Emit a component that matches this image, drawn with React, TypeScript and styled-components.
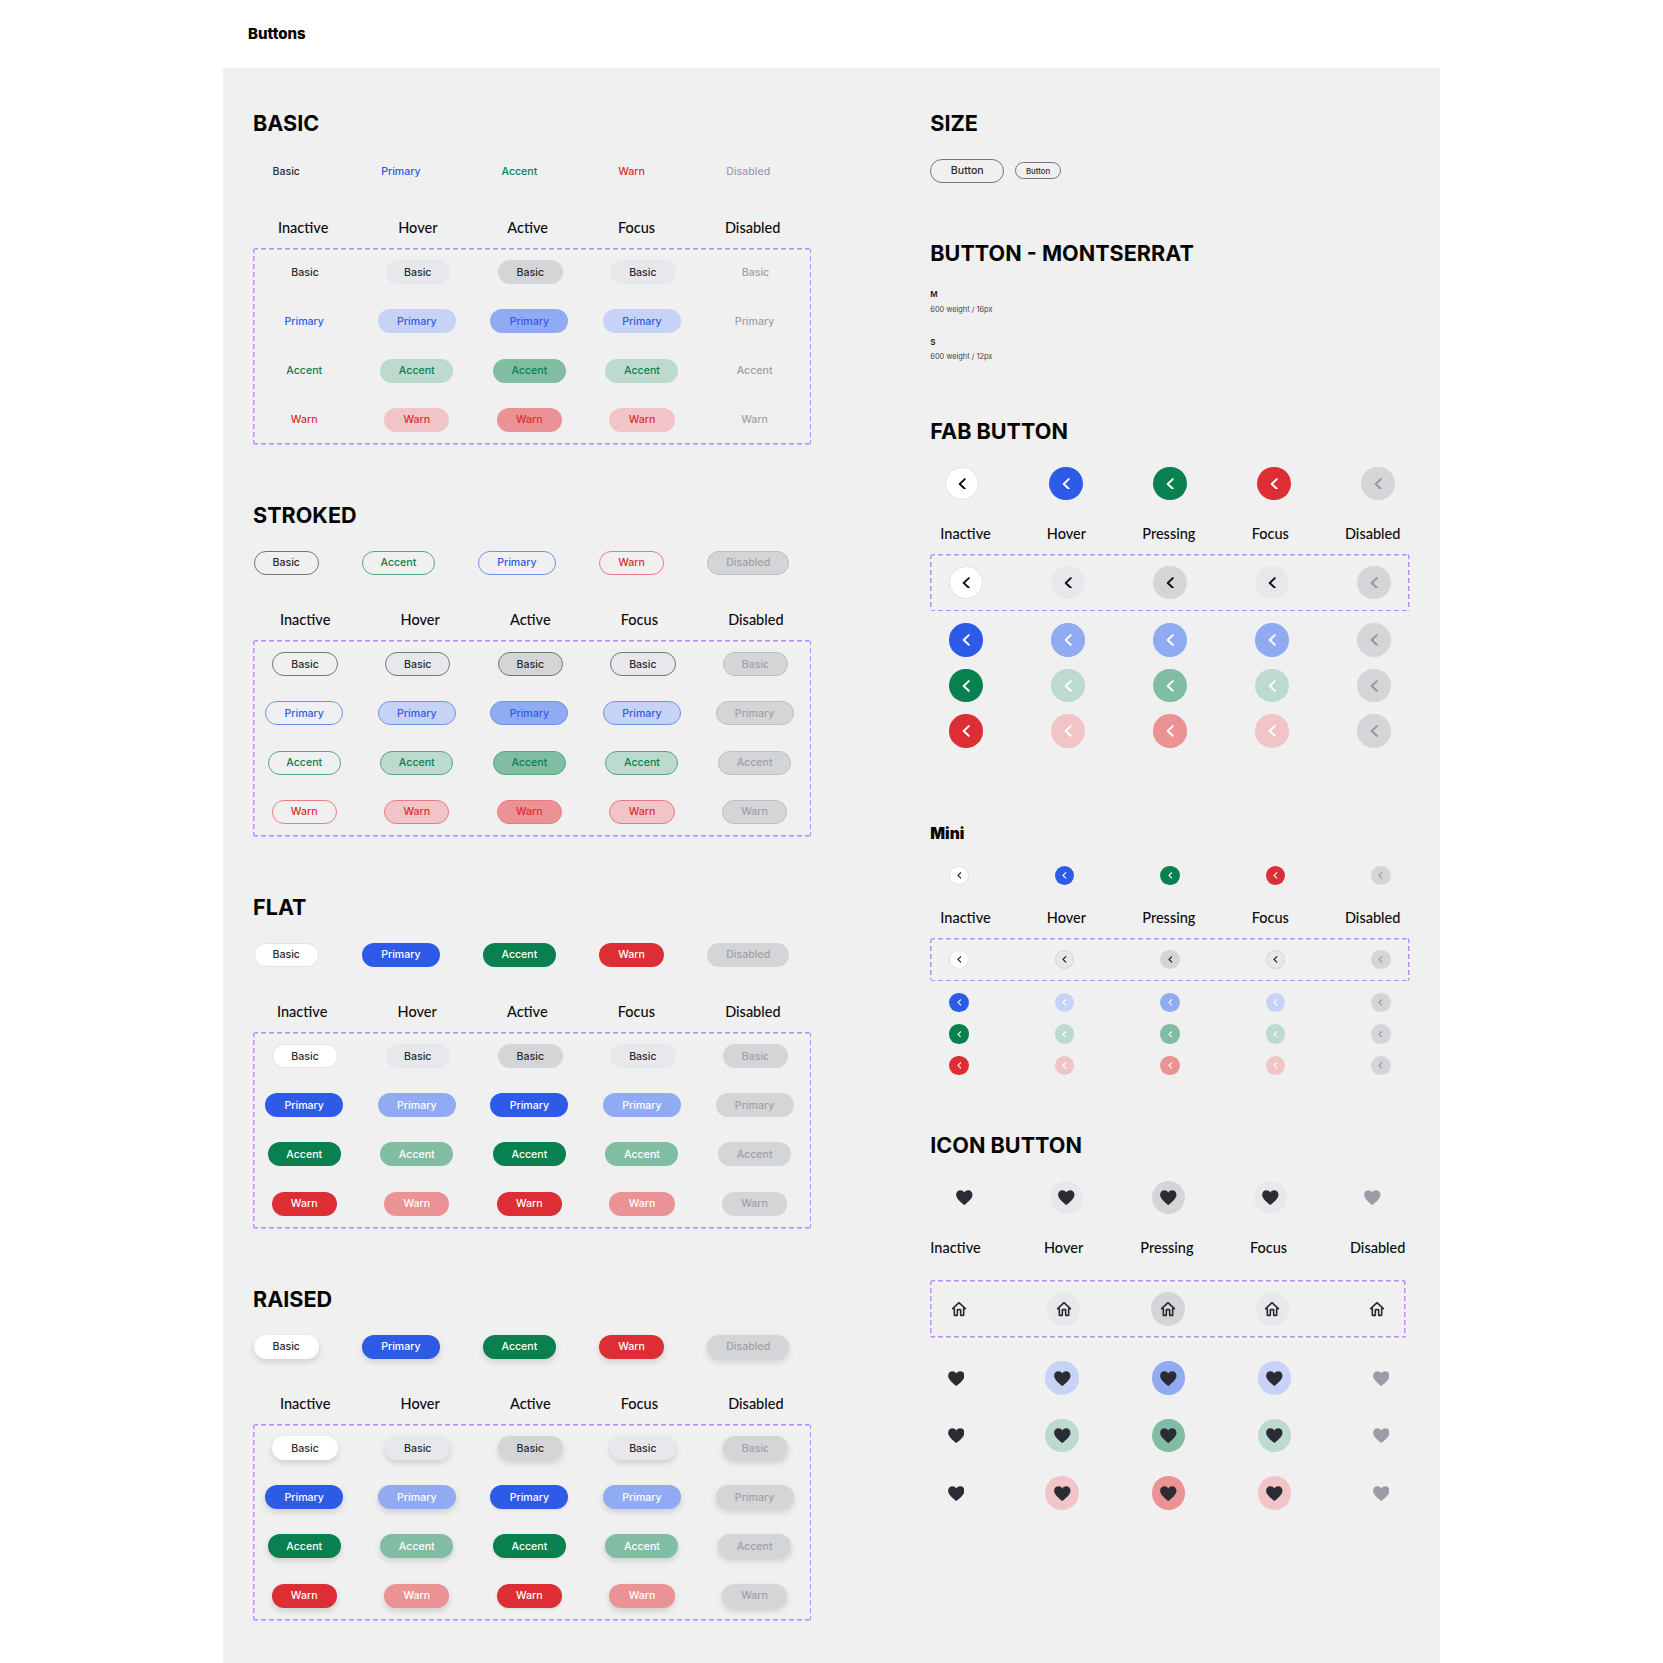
import React, { FC } from "react";
import styled, { createGlobalStyle } from "styled-components";

type Tone = "basic" | "primary" | "accent" | "warn";
type Variant = "basic" | "stroked" | "flat" | "raised";

const GRAY_BG = "#d4d5d7";
const GRAY_TEXT = "#a0a1ab";
const GRAY_LINE = "#bdbec4";
const DASH = "#b98cf7";

const TONES: Record<Tone, { main: string; soft: string; mid: string; line: string }> = {
  basic: { main: "#2b2b30", soft: "#e7e8ec", mid: "#d4d5d7", line: "#757575" },
  primary: { main: "#2d5be8", soft: "#c6d3f7", mid: "#91abf3", line: "#6f93ee" },
  accent: { main: "#08804f", soft: "#bcdacd", mid: "#80bda3", line: "#56a784" },
  warn: { main: "#dd2e35", soft: "#f1c5c7", mid: "#ea9294", line: "#ea7c80" },
};

const WIDTHS: Record<string, number> = { Basic: 65.4, Primary: 78, Accent: 73, Warn: 65.4, Disabled: 82 };
const LABEL_OF: Record<Tone, string> = { basic: "Basic", primary: "Primary", accent: "Accent", warn: "Warn" };
const TONE_LIST: Tone[] = ["basic", "primary", "accent", "warn"];

const GlobalStyle = createGlobalStyle`
  * { box-sizing: border-box; }
  html, body { margin: 0; padding: 0; background: #fff; }
  body { font-family: "Inter", "Liberation Sans", sans-serif; color: #0c0c0c; }
`;

const Page = styled.div`
  width: 1663px;
  height: 1663px;
  overflow: hidden;
`;

const TopBar = styled.header`
  height: 68px;
  padding: 0 0 2px 248px;
  display: flex;
  align-items: center;
  font-size: 15px;
  font-weight: 800;
  color: #000;
`;

const Panel = styled.main`
  width: 1217px;
  height: 1595px;
  margin-left: 223px;
  padding: 42px 0 0 30px;
  background: #f0f0f0;
  display: flex;
  gap: 119.3px;
`;

const LeftColumn = styled.div`
  width: 558px;
  display: flex;
  flex-direction: column;
  gap: 57px;
`;

const RightColumn = styled.div`
  width: 480px;
  display: flex;
  flex-direction: column;
`;

const Section = styled.section`
  display: flex;
  flex-direction: column;
`;

const Title = styled.h2<{ $top?: number }>`
  margin: ${(p) => p.$top ?? 0}px 0 0;
  height: 26px;
  line-height: 26px;
  font-size: 21.6px;
  font-weight: 700;
  color: #050505;
`;

const MiniTitle = styled.h3`
  margin: 76px 0 0;
  height: 20px;
  line-height: 20px;
  font-size: 15.5px;
  font-weight: 900;
  color: #050505;
`;

const SampleRow = styled.div`
  margin-top: 23px;
  padding-left: 0.5px;
  display: flex;
  gap: 43px;
`;

const LabelRow = styled.div<{ $pad: number; $gap?: number; $top?: number; $bottom?: number }>`
  margin: ${(p) => p.$top ?? 35}px 0 ${(p) => p.$bottom ?? 10}px;
  padding-left: ${(p) => p.$pad}px;
  height: 20px;
  display: flex;
  gap: ${(p) => p.$gap ?? 70.2}px;
`;

const StateLabel = styled.span`
  font-family: "Lato", "Liberation Sans", sans-serif;
  font-size: 14.5px;
  font-weight: 500;
  line-height: 20px;
  color: #0c0c0c;
  white-space: nowrap;
`;

const IconLabelRow = styled.div`
  margin: 23.5px 0 22px;
  height: 20px;
  display: grid;
  grid-template-columns: 113.7px 96.3px 109.7px 100px auto;
`;

// dashes drawn as gradients: a css dashed border gives too short a dash here
const DashedBox = styled.div<{ $width?: number; $pad: string }>`
  width: ${(p) => p.$width ?? 479.4}px;
  padding: ${(p) => p.$pad};
  border-radius: 3px;
  background:
    repeating-linear-gradient(90deg, ${DASH} 0 5px, transparent 5px 8px) top / 100% 1.5px no-repeat,
    repeating-linear-gradient(90deg, ${DASH} 0 5px, transparent 5px 8px) bottom / 100% 1.5px no-repeat,
    repeating-linear-gradient(180deg, ${DASH} 0 5px, transparent 5px 8px) left / 1.5px 100% no-repeat,
    repeating-linear-gradient(180deg, ${DASH} 0 5px, transparent 5px 8px) right / 1.5px 100% no-repeat;
`;

const ButtonGrid = styled.div`
  display: flex;
  flex-direction: column;
  gap: 25.2px;
`;

const ButtonRow = styled.div<{ $shift: number }>`
  width: 563px;
  margin-left: ${(p) => p.$shift}px;
  display: grid;
  grid-template-columns: repeat(5, 112.6px);
  justify-items: center;
`;

const Btn = styled.button<{ $w: number; $bg: string; $fg: string; $line: string; $shadow: string }>`
  width: ${(p) => p.$w}px;
  height: 24px;
  padding: 0;
  border: ${(p) => (p.$line === "none" ? "none" : `1px solid ${p.$line}`)};
  border-radius: 12px;
  background: ${(p) => p.$bg};
  color: ${(p) => p.$fg};
  box-shadow: ${(p) => p.$shadow};
  font-family: "Inter", "Liberation Sans", sans-serif;
  font-size: 10.6px;
  font-weight: 550;
`;

const SizeRow = styled.div`
  margin-top: 22.7px;
  height: 24px;
  display: flex;
  align-items: center;
  gap: 10.6px;
`;

const SizeButton = styled.button<{ $small?: boolean }>`
  width: ${(p) => (p.$small ? 46.3 : 74)}px;
  height: ${(p) => (p.$small ? 17 : 24)}px;
  padding: 0;
  border: 1px solid #757575;
  border-radius: 12px;
  background: transparent;
  color: #2b2b30;
  font-family: "Inter", "Liberation Sans", sans-serif;
  font-size: ${(p) => (p.$small ? 7.8 : 10.6)}px;
  font-weight: 550;
`;

const TypeName = styled.div<{ $top: number }>`
  margin-top: ${(p) => p.$top}px;
  height: 12px;
  line-height: 12px;
  font-size: 8px;
  font-weight: 600;
  color: #1a1a1a;
`;

const TypeNote = styled.div<{ $top: number }>`
  margin-top: ${(p) => p.$top}px;
  height: 11px;
  line-height: 11px;
  font-size: 7.4px;
  color: #444;
`;

const CircleRow = styled.div<{ $pad: number; $gap: number; $top?: number }>`
  margin-top: ${(p) => p.$top ?? 0}px;
  padding-left: ${(p) => p.$pad}px;
  display: flex;
  gap: ${(p) => p.$gap}px;
`;

const CircleStack = styled.div<{ $gap: number; $top: number }>`
  margin-top: ${(p) => p.$top}px;
  display: flex;
  flex-direction: column;
  gap: ${(p) => p.$gap}px;
`;

const Circle = styled.button<{ $size: number; $bg: string; $fg: string; $line?: string }>`
  width: ${(p) => p.$size}px;
  height: ${(p) => p.$size}px;
  flex: none;
  padding: 0;
  border: ${(p) => (p.$line ? `1px solid ${p.$line}` : "none")};
  border-radius: 50%;
  background: ${(p) => p.$bg};
  color: ${(p) => p.$fg};
  display: flex;
  align-items: center;
  justify-content: center;
`;

type IconProps = { size: number };

const Chevron: FC<IconProps> = ({ size }) => (
  <svg width={size} height={size * 1.4} viewBox="0 0 10 14" fill="none" stroke="currentColor" strokeWidth="2.3" strokeLinecap="round" strokeLinejoin="round">
    <path d="M8 1.300 2 7l6 5.700" />
  </svg>
);

const Heart: FC<IconProps> = ({ size }) => (
  <svg width={size} height={size * 0.9} viewBox="0 0 20 18" fill="currentColor">
    <path d="M10 18C9.400 17.500 1.400 11.600.4 7.400-.6 3.300 1.900.3 5.200.3c2 0 3.800 1 4.800 2.800C11 1.300 12.800.3 14.800.3c3.300 0 5.800 3 4.800 7.100C18.600 11.600 10.600 17.500 10 18z" />
  </svg>
);

const House: FC<IconProps> = ({ size }) => (
  <svg width={size} height={size} viewBox="0 0 24 24" fill="none" stroke="currentColor" strokeWidth="2.400" strokeLinecap="round" strokeLinejoin="round">
    <path d="M2.500 11.500 12 2.500l9.500 9H19V21.500h-4.500V14a1 1 0 0 0-1-1h-3a1 1 0 0 0-1 1v7.500H5V11.500z" />
  </svg>
);

const look = (variant: Variant, tone: Tone, state: number) => {
  const c = TONES[tone];
  const isBasic = tone === "basic";
  if (variant === "basic" || variant === "stroked") {
    const stroked = variant === "stroked";
    if (state === 4) {
      return { $bg: stroked ? GRAY_BG : "transparent", $fg: GRAY_TEXT, $line: stroked ? GRAY_LINE : "none", $shadow: "none" };
    }
    const bg = state === 0 ? "transparent" : state === 2 ? c.mid : c.soft;
    return { $bg: bg, $fg: c.main, $line: stroked ? c.line : "none", $shadow: "none" };
  }
  const raised = variant === "raised";
  const lift = raised ? "0 3px 6px rgba(0, 0, 0, 0.14)" : "none";
  if (state === 4) {
    return { $bg: GRAY_BG, $fg: GRAY_TEXT, $line: "none", $shadow: lift };
  }
  if (isBasic) {
    const bg = state === 0 ? "#ffffff" : state === 2 ? c.mid : c.soft;
    const line = !raised && state === 0 ? "#e4e4e4" : "none";
    return { $bg: bg, $fg: c.main, $line: line, $shadow: lift };
  }
  const strong = state === 0 || state === 2;
  const bg = strong ? c.main : c.mid;
  return { $bg: bg, $fg: "#ffffff", $line: "none", $shadow: raised && state === 2 ? "0 1px 3px rgba(0, 0, 0, 0.1)" : lift };
};

const SAMPLE_ORDER: Record<Variant, Tone[]> = {
  basic: ["basic", "primary", "accent", "warn"],
  stroked: ["basic", "accent", "primary", "warn"],
  flat: ["basic", "primary", "accent", "warn"],
  raised: ["basic", "primary", "accent", "warn"],
};

const STATES = ["Inactive", "Hover", "Active", "Focus", "Disabled"];
const PRESS_STATES = ["Inactive", "Hover", "Pressing", "Focus", "Disabled"];

type ButtonSectionProps = { title: string; variant: Variant; labelPad: number; labelGap: number };

const ButtonSection: FC<ButtonSectionProps> = ({ title, variant, labelPad, labelGap }) => (
  <Section>
    <Title>{title}</Title>
    <SampleRow>
      {SAMPLE_ORDER[variant].map((tone) => (
        <Btn key={tone} $w={WIDTHS[LABEL_OF[tone]]} {...look(variant, tone, 0)}>
          {LABEL_OF[tone]}
        </Btn>
      ))}
      <Btn $w={WIDTHS.Disabled} {...look(variant, "basic", 4)}>Disabled</Btn>
    </SampleRow>
    <LabelRow $pad={labelPad} $gap={labelGap}>
      {STATES.map((s) => (
        <StateLabel key={s}>{s}</StateLabel>
      ))}
    </LabelRow>
    <DashedBox $width={558} $pad="12.200px 0 13.200px">
      <ButtonGrid>
        {TONE_LIST.map((tone) => (
          <ButtonRow key={tone} $shift={tone === "basic" ? -4.2 : -5.1}>
            {STATES.map((_, state) => (
              <Btn key={state} $w={WIDTHS[LABEL_OF[tone]]} {...look(variant, tone, state)}>
                {LABEL_OF[tone]}
              </Btn>
            ))}
          </ButtonRow>
        ))}
      </ButtonGrid>
    </DashedBox>
  </Section>
);

// round buttons, index is the state column
const fabLook = (tone: Tone, state: number, softHover: boolean) => {
  const c = TONES[tone];
  if (state === 4) return { $bg: GRAY_BG, $fg: "#9396a3" };
  if (tone === "basic") {
    if (state === 0) return { $bg: "#ffffff", $fg: "#111111", $line: "#e0e0e0" };
    return { $bg: state === 2 ? c.mid : c.soft, $fg: "#111111" };
  }
  if (state === 0) return { $bg: c.main, $fg: "#ffffff" };
  if (state === 2) return { $bg: c.mid, $fg: "#ffffff" };
  return { $bg: softHover ? c.soft : c.mid, $fg: "#ffffff" };
};

const TOP_FAB: Tone[] = ["basic", "primary", "accent", "warn"];

const App: FC = () => (
  <Page>
    <GlobalStyle />
    <TopBar>Buttons</TopBar>
    <Panel>
      <LeftColumn>
        <ButtonSection title="BASIC" variant="basic" labelPad={25} labelGap={69.9} />
        <ButtonSection title="STROKED" variant="stroked" labelPad={27} labelGap={70.2} />
        <ButtonSection title="FLAT" variant="flat" labelPad={24} labelGap={70.2} />
        <ButtonSection title="RAISED" variant="raised" labelPad={27} labelGap={70.2} />
      </LeftColumn>

      <RightColumn>
        <Title>SIZE</Title>
        <SizeRow>
          <SizeButton>Button</SizeButton>
          <SizeButton $small>Button</SizeButton>
        </SizeRow>

        <Title $top={57}>BUTTON - MONTSERRAT</Title>
        <TypeName $top={22.3}>M</TypeName>
        <TypeNote $top={4.2}>600 weight / 16px</TypeNote>
        <TypeName $top={20.8}>S</TypeName>
        <TypeNote $top={2.8}>600 weight / 12px</TypeNote>

        <Title $top={56.2}>FAB BUTTON</Title>
        <CircleRow $pad={15} $gap={70.5} $top={22.8}>
          {TOP_FAB.map((tone) => (
            <Circle key={tone} $size={33.5} {...fabLook(tone, 0, false)}>
              <Chevron size={8.5} />
            </Circle>
          ))}
          <Circle $size={33.5} {...fabLook("basic", 4, false)}>
            <Chevron size={8.5} />
          </Circle>
        </CircleRow>
        <LabelRow $pad={10} $gap={56.2} $top={23.7} $bottom={9.6}>
          {PRESS_STATES.map((s) => (
            <StateLabel key={s}>{s}</StateLabel>
          ))}
        </LabelRow>
        <DashedBox $pad="12.200px 0">
          <CircleRow $pad={19.2} $gap={68.5}>
            {PRESS_STATES.map((_, state) => (
              <Circle key={state} $size={33.5} {...fabLook("basic", state, false)}>
                <Chevron size={8.5} />
              </Circle>
            ))}
          </CircleRow>
        </DashedBox>
        <CircleStack $gap={12.1} $top={11.9}>
          {(["primary", "accent", "warn"] as Tone[]).map((tone) => (
            <CircleRow key={tone} $pad={19.2} $gap={68.5}>
              {PRESS_STATES.map((_, state) => (
                <Circle key={state} $size={33.5} {...fabLook(tone, state, tone !== "primary")}>
                  <Chevron size={8.5} />
                </Circle>
              ))}
            </CircleRow>
          ))}
        </CircleStack>

        <MiniTitle>Mini</MiniTitle>
        <CircleRow $pad={19} $gap={86.2} $top={21.6}>
          {TOP_FAB.map((tone) => (
            <Circle key={tone} $size={19.3} {...fabLook(tone, 0, false)}>
              <Chevron size={4.8} />
            </Circle>
          ))}
          <Circle $size={19.3} {...fabLook("basic", 4, false)}>
            <Chevron size={4.8} />
          </Circle>
        </CircleRow>
        <LabelRow $pad={10} $gap={56.2} $top={23.3} $bottom={10}>
          {PRESS_STATES.map((s) => (
            <StateLabel key={s}>{s}</StateLabel>
          ))}
        </LabelRow>
        <DashedBox $pad="12px 0">
          <CircleRow $pad={19} $gap={86.2}>
            {PRESS_STATES.map((_, state) => (
              <Circle key={state} $size={19.3} {...fabLook("basic", state, false)} $line={state === 1 || state === 3 ? "#d4d5d7" : state === 0 ? "#e0e0e0" : undefined}>
                <Chevron size={4.8} />
              </Circle>
            ))}
          </CircleRow>
        </DashedBox>
        <CircleStack $gap={11.9} $top={11.7}>
          {(["primary", "accent", "warn"] as Tone[]).map((tone) => (
            <CircleRow key={tone} $pad={19} $gap={86.2}>
              {PRESS_STATES.map((_, state) => (
                <Circle key={state} $size={19.3} {...fabLook(tone, state, true)}>
                  <Chevron size={4.8} />
                </Circle>
              ))}
            </CircleRow>
          ))}
        </CircleStack>

        <Title $top={57.3}>ICON BUTTON</Title>
        <CircleRow $pad={17.5} $gap={68.5} $top={22.7}>
          {PRESS_STATES.map((_, state) => (
            <Circle
              key={state}
              $size={33.5}
              $bg={state === 1 || state === 3 ? TONES.basic.soft : state === 2 ? TONES.basic.mid : "transparent"}
              $fg={state === 4 ? "#9b9ca6" : "#2b2c33"}
            >
              <Heart size={16.6} />
            </Circle>
          ))}
        </CircleRow>
        <IconLabelRow>
          {PRESS_STATES.map((s) => (
            <StateLabel key={s}>{s}</StateLabel>
          ))}
        </IconLabelRow>
        <DashedBox $width={475.4} $pad="12.200px 0">
          <CircleRow $pad={12.2} $gap={70.9}>
            {PRESS_STATES.map((_, state) => (
              <Circle
                key={state}
                $size={33.5}
                $bg={state === 1 || state === 3 ? TONES.basic.soft : state === 2 ? TONES.basic.mid : "transparent"}
                $fg="#2b2c33"
              >
                <House size={16} />
              </Circle>
            ))}
          </CircleRow>
        </DashedBox>
        <CircleStack $gap={24} $top={23.8}>
          {(["primary", "accent", "warn"] as Tone[]).map((tone) => (
            <CircleRow key={tone} $pad={9} $gap={72.7}>
              {PRESS_STATES.map((_, state) => (
                <Circle
                  key={state}
                  $size={33.5}
                  $bg={state === 1 || state === 3 ? TONES[tone].soft : state === 2 ? TONES[tone].mid : "transparent"}
                  $fg={state === 4 ? "#9b9ca6" : "#2b2c33"}
                >
                  <Heart size={16.6} />
                </Circle>
              ))}
            </CircleRow>
          ))}
        </CircleStack>
      </RightColumn>
    </Panel>
  </Page>
);

export default App;
